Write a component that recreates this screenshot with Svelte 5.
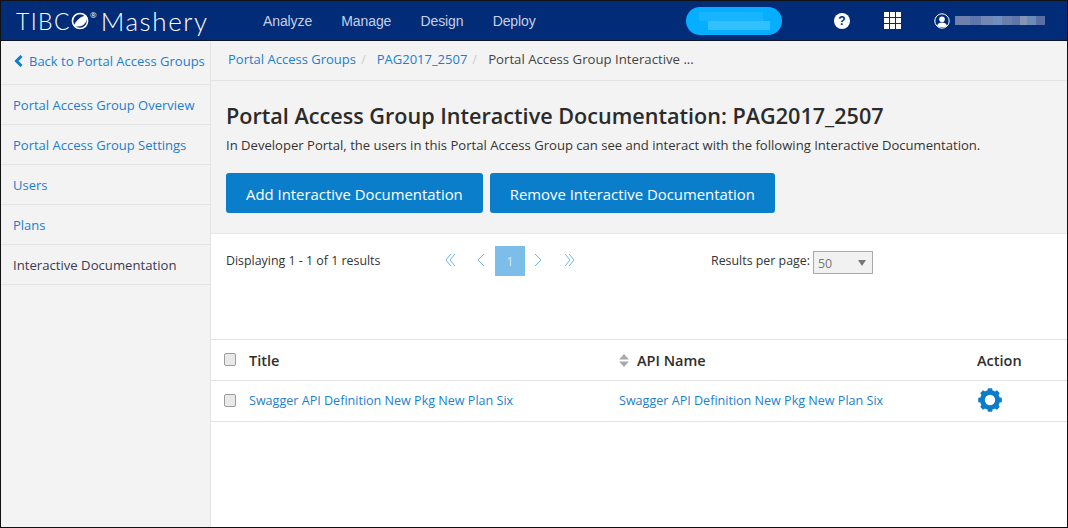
<script>
  const top = ['Analyze', 'Manage', 'Design', 'Deploy'];
  const side = ['Portal Access Group Overview', 'Portal Access Group Settings', 'Users', 'Plans'];
  const blur = [['#6f7fae', 30], ['#5f76ad', 22], ['#7486b5', 24], ['#6f8fc0', 18], ['#6b7fae', 20], ['#5f76ab', 16], ['#8795b5', 14], ['#6b8cb8', 18], ['#5a6fa6', 18]];
  const teeth = [0, 45, 90, 135, 180, 225, 270, 315];
</script>

<div class="page">
  <header class="top">
    <div class="logo">
      <span class="tibco">TIBC</span>
      <svg class="ball" viewBox="0 0 20 20" width="18" height="18" aria-hidden="true">
        <circle cx="10" cy="10" r="8.4" fill="none" stroke="#fff" stroke-width="1.8" />
        <path d="M3 15 C7 8 11 5 17 4 C19 10 15 17 6 16Z" fill="#fff" />
      </svg>
      <sup>®</sup>
      <span class="mash">Mashery</span>
    </div>
    <nav>
      {#each top as t}<a href="#top">{t}</a>{/each}
    </nav>
    <div class="pill"><span class="pill-a"></span><span class="pill-b"></span></div>
    <div class="help">?</div>
    <div class="grid">
      {#each Array(9) as _}<i></i>{/each}
    </div>
    <svg class="user" viewBox="0 0 16 16" width="16" height="16" aria-hidden="true">
      <circle cx="8" cy="8" r="7.2" fill="none" stroke="#fff" stroke-width="1" />
      <circle cx="8" cy="6.2" r="2.8" fill="#fff" />
      <path d="M3 13 C3.6 10.2 5.8 9.6 8 9.6 C10.2 9.6 12.4 10.2 13 13 C11.5 14.6 4.5 14.6 3 13Z" fill="#fff" />
    </svg>
    <div class="uname">
      {#each blur as b}<span style="background:{b[0]};width:{b[1]}%"></span>{/each}
    </div>
  </header>

  <div class="body">
    <aside>
      <a class="back" href="#top">
        <svg viewBox="0 0 10 12" width="10" height="12" aria-hidden="true"><path d="M7.5 1 L2.5 6 L7.5 11" fill="none" stroke="#0a7fd0" stroke-width="3" /></svg>
        <span>Back to Portal Access Groups</span>
      </a>
      {#each side as s}<a class="item" href="#top">{s}</a>{/each}
      <a class="item current" href="#top">Interactive Documentation</a>
    </aside>

    <main>
      <div class="crumbs">
        <a href="#top">Portal Access Groups</a><span class="sep">/</span>
        <a href="#top">PAG2017_2507</a><span class="sep">/</span>
        <span class="cur">Portal Access Group Interactive ...</span>
      </div>
      <section class="intro">
        <h1>Portal Access Group Interactive Documentation: PAG2017_2507</h1>
        <p>In Developer Portal, the users in this Portal Access Group can see and interact with the following Interactive Documentation.</p>
        <div class="btns">
          <button>Add Interactive Documentation</button>
          <button>Remove Interactive Documentation</button>
        </div>
      </section>

      <section class="pager">
        <div class="count">Displaying 1 - 1 of 1 results</div>
        <div class="pages">
          <svg viewBox="0 0 11 16" width="11" height="16" aria-hidden="true"><path d="M6 2 L1 8 L6 14 M10 2 L5 8 L10 14" /></svg>
          <svg class="p2" viewBox="0 0 10 16" width="10" height="16" aria-hidden="true"><path d="M8 2 L2 8 L8 14" /></svg>
          <span class="num">1</span>
          <svg class="p3" viewBox="0 0 10 16" width="10" height="16" aria-hidden="true"><path d="M2 2 L8 8 L2 14" /></svg>
          <svg class="p4" viewBox="0 0 11 16" width="11" height="16" aria-hidden="true"><path d="M1 2 L6 8 L1 14 M5 2 L10 8 L5 14" /></svg>
        </div>
        <div class="per">
          <span>Results per page:</span>
          <div class="select"><span>50</span><b></b></div>
        </div>
      </section>

      <div class="table">
        <div class="row head">
          <div class="c1"><span class="check"></span><span>Title</span></div>
          <div class="c2">
            <svg viewBox="0 0 9 12" width="10" height="13" aria-hidden="true"><path d="M4.5 0 L9 5 H0Z M0 7 H9 L4.5 12Z" fill="#a9a9a9" /></svg>
            <span>API Name</span>
          </div>
          <div class="c3">Action</div>
        </div>
        <div class="row item-row">
          <div class="c1"><span class="check"></span><a href="#top">Swagger API Definition New Pkg New Plan Six</a></div>
          <div class="c2 plain"><a href="#top">Swagger API Definition New Pkg New Plan Six</a></div>
          <div class="c3">
            <svg class="gear" viewBox="0 0 24 24" width="24" height="24" aria-hidden="true">
              <circle cx="12" cy="12" r="7.6" fill="none" stroke="#0a7cc9" stroke-width="4.8" />
              {#each teeth as a}
                <rect x="9.6" y="0.2" width="4.8" height="5" rx="1.2" fill="#0a7cc9" transform="rotate({a} 12 12)" />
              {/each}
            </svg>
          </div>
        </div>
      </div>
    </main>
  </div>
</div>

<style>
  :global(body) { margin: 0; }
  * { box-sizing: border-box; }
  .page {
    width: 1068px; height: 528px; overflow: hidden;
    display: flex; flex-direction: column;
    border: 1px solid #111;
    font-family: "Open Sans", "Noto Sans", sans-serif;
    font-size: 13px; color: #333; background: #fff;
  }
  a { color: #1b7fcc; text-decoration: none; }

  .top {
    height: 40px; flex: none; background: #032c78;
    border-bottom: 1px solid #0b1530;
    display: flex; align-items: center; color: #fff;
  }
  .logo { display: flex; align-items: center; width: 248px; padding-left: 15px; color: #fff; }
  .tibco { font-family: "Lato", sans-serif; font-size: 23px; font-weight: 300; letter-spacing: 1.4px; }
  .ball { margin-left: 0; }
  .logo sup { font-size: 8px; margin: -12px 4px 0 1px; line-height: 1; }
  .mash { font-family: "Lato", sans-serif; font-size: 26px; font-weight: 300; letter-spacing: 1.6px; }
  nav { display: flex; gap: 29.2px; width: 437px; padding-left: 14px; }
  nav a { color: #c6d0e4; font-family: "Liberation Sans", sans-serif; font-size: 14px; letter-spacing: -0.1px; }
  .pill {
    width: 96px; height: 28px; border-radius: 14px;
    background: #05aeff; position: relative;
  }
  .pill-a { position: absolute; left: 13px; top: 5px; width: 64px; height: 9px; background: #17b4ff; }
  .pill-b { position: absolute; left: 22px; top: 14px; width: 62px; height: 9px; background: #33c0ff; }
  .help {
    width: 16px; height: 16px; border-radius: 50%; margin-left: 52px;
    background: #fff; color: #032c78; font: bold 12px/16px "Liberation Sans", sans-serif; text-align: center;
  }
  .grid { display: grid; grid-template-columns: repeat(3, 5px); grid-auto-rows: 5px; gap: 1px; margin-left: 34px; }
  .grid i { background: #fff; display: block; }
  .user { margin-left: 33px; }
  .uname { display: flex; width: 90px; height: 9px; margin-left: 5px; }
  .uname span { display: block; flex: auto; }

  .body { flex: 1; display: flex; min-height: 0; }
  aside { width: 210px; flex: none; background: #f3f3f3; border-right: 1px solid #e3e3e3; display: flex; flex-direction: column; }
  .back { height: 44px; display: flex; align-items: center; gap: 5px; padding: 0 0 4px 13px; border-bottom: 1px solid #e3e3e3; }
  .item { height: 40px; display: flex; align-items: center; padding-left: 12px; border-bottom: 1px solid #e3e3e3; }
  .item.current { color: #3a3a55; font-size: 13.15px; }

  main { flex: 1; min-width: 0; display: flex; flex-direction: column; }
  .crumbs { height: 40px; background: #f3f3f3; border-bottom: 1px solid #e3e3e3; display: flex; align-items: center; padding: 0 0 4px 17px; }
  .sep { color: #ccc; margin: 0 11px 0 5px; }
  .cur { color: #444; font-size: 13.2px; }
  .intro { height: 153px; background: #f3f3f3; border-bottom: 1px solid #e8e8e8; padding: 21px 0 0 15px; }
  h1 { margin: 0; font-size: 21.6px; font-weight: 600; line-height: 28px; color: #2b2b2b; }
  p { margin: 6px 0 0; line-height: 18px; font-size: 13.09px; }
  .btns { display: flex; gap: 7px; margin-top: 19px; }
  button {
    height: 40px; padding: 1px 20px 0; border: 0; border-radius: 3px; background: #0a7ecb; color: #fff;
    font: 500 14.9px "Open Sans", sans-serif;
  }
  .pager { height: 106px; display: flex; align-items: flex-start; border-bottom: 1px solid #e3e3e3; position: relative; font-size: 12.4px; }
  .count { padding: 18px 0 0 15px; width: 234px; }
  .pages { display: flex; align-items: center; height: 30px; margin-top: 12px; }
  .pages svg { fill: none; stroke: #6db4e6; stroke-width: 1; margin-bottom: 3px; }
  .pages .p2 { margin-left: 20px; }
  .num { width: 30px; height: 30px; background: #7dbde9; color: #cfe6f6; margin-left: 9px; display: flex; align-items: center; justify-content: center; font-size: 13px; }
  .pages .p3 { margin-left: 8px; }
  .pages .p4 { margin-left: 21px; }
  .per { position: absolute; left: 500px; top: 18px; display: flex; align-items: flex-start; gap: 3px; }
  .select { width: 60px; height: 23px; background: #f1f1f1; border: 1px solid #a9a9a9; color: #777; display: flex; justify-content: space-between; padding: 3px 6px 0 4px; margin-top: -1px; }
  .select b { width: 0; height: 0; margin-top: 5px; border: 4px solid transparent; border-top: 6px solid #777; border-bottom: 0; }

  .row { height: 41px; display: flex; align-items: center; border-bottom: 1px solid #e3e3e3; font-size: 12.57px; }
  .row.item-row { padding-bottom: 2px; }
  .head { font-size: 14.5px; font-weight: 600; color: #2e2e2e; }
  .head .check { margin-bottom: 2px; }
  .c1 { width: 407px; display: flex; align-items: center; padding-left: 13px; gap: 13px; }
  .c2 { width: 358px; display: flex; align-items: center; gap: 8px; padding-left: 1px; }
  .c3 { padding-left: 1px; display: flex; align-items: center; }
  .gear { display: block; margin-left: 1px; }
  .check { width: 12px; height: 13px; border: 1px solid #9c9c9c; border-radius: 2px; background: #e9e9e9; display: block; }
</style>
